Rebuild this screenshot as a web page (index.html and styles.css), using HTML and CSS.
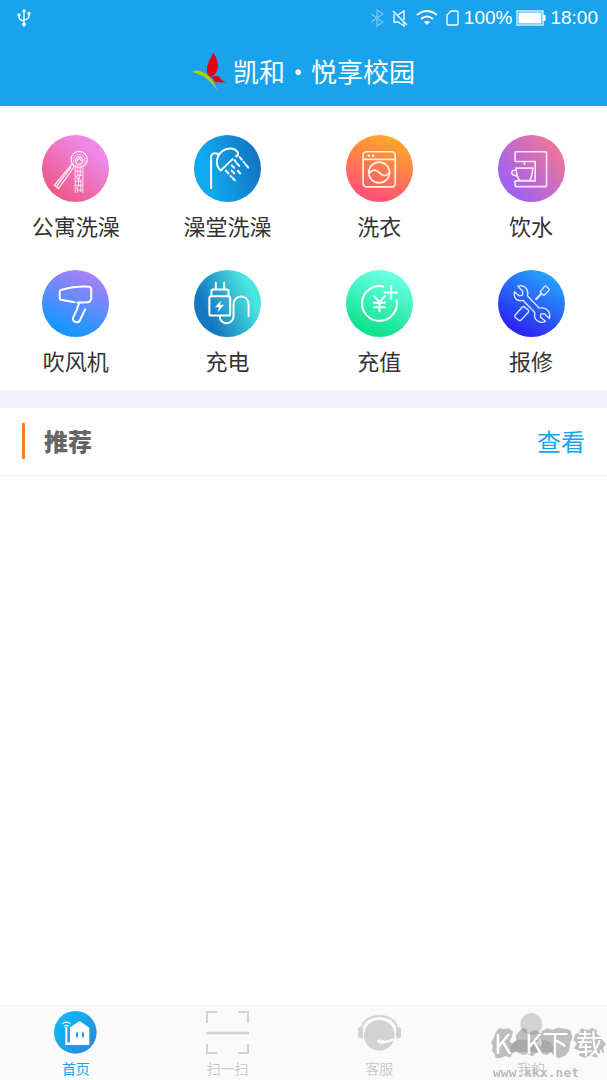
FILE: index.html
```html
<!DOCTYPE html>
<html lang="zh-CN">
<head>
<meta charset="utf-8">
<meta name="viewport" content="width=device-width, initial-scale=1">
<title>凯和·悦享校园</title>
<link rel="stylesheet" href="styles.css">
</head>
<body>
<header class="top">
  <div class="status">
    <svg class="usb" width="16" height="20" viewBox="0 0 16 20" fill="none" stroke="#fff" stroke-width="1.3"><path d="M8 3V17M3 7v2q0 3 5 4M13 6v2q0 3-5 4"/><circle cx="8" cy="3" r="1" fill="#fff"/><circle cx="8" cy="16.500" r="1.300" fill="#fff"/><circle cx="3" cy="7" r="1" fill="#fff"/><circle cx="13" cy="5.500" r="1" fill="#fff"/></svg>
    <div class="status-right">
      <svg width="14" height="18" viewBox="0 0 14 18" fill="none" stroke="#7cc9f5" stroke-width="1.2"><path d="M1 5l12 8-6 4V1l6 4L1 13"/></svg>
      <svg width="16" height="18" viewBox="0 0 16 18" fill="none" stroke="#fff" stroke-width="1.3"><path d="M1 2l14 14M6 6l6-4v9M2 5v8h4l6 4v-4"/></svg>
      <svg class="wifi" width="22" height="18" viewBox="0 0 22 18" fill="none" stroke="#fff" stroke-width="2"><path d="M1 6q10-8 20 0M5 10q6-5 12 0"/><path d="M8 13q3-2 6 0l-3 3z" fill="#fff" stroke="none"/></svg>
      <svg class="sim" width="14" height="18" viewBox="0 0 14 18" fill="none" stroke="#fff" stroke-width="1.3"><path d="M5 2h6q1 0 1 1v12q0 1-1 1H2q-1 0-1-1V6z"/></svg>
      <span>100%</span>
      <svg class="battery" width="30" height="16" viewBox="0 0 30 16"><rect x="1" y="1" width="26" height="14" fill="none" stroke="#fff" stroke-width="1.2"/><path d="M2.500 2.500h23v11h-23zM27 5h2.500v6H27z" fill="#fff"/></svg>
      <span>18:00</span>
    </div>
  </div>
  <div class="title">
    <svg width="34" height="38" viewBox="0 0 102 114"><path d="M0 60Q16 48 42 66Q66 84 76 114Q50 80 30 71Q14 64 0 60z" fill="#b1d000"/><path d="M64 2Q84 34 76 54Q70 72 54 74Q42 66 45 46Q48 30 64 2z" fill="#e60012"/><path d="M56 76Q76 66 84 78Q90 88 102 91Q82 92 68 90Q68 82 56 76z" fill="#e60012"/></svg>
    <h1>凯和·悦享校园</h1>
  </div>
</header>

<main class="content">
  <nav class="services" aria-label="服务">
    <button class="service" type="button">
      <svg viewBox="0 0 200 200"><defs><linearGradient id="g1" x1="0.150" y1="0.850" x2="0.700" y2="0.200"><stop offset="0" stop-color="#ed5787"/><stop offset="1" stop-color="#ee87e8"/></linearGradient></defs><circle cx="100" cy="100" r="100" fill="url(#g1)"/><g fill="none" stroke="#fff" stroke-width="4" opacity="0.850"><circle cx="111" cy="73" r="24"/><circle cx="111" cy="75" r="17" stroke-width="2"/><circle cx="111" cy="76" r="11"/><path d="M103 79q8-16 16 0M90 86l6 9-47 65-12-10zM87 95l-43 58"/><path stroke-width="3" d="M99 97v76M107 100v18l-4 8 6 8v18l-5 8 4 12M114 98v24l-5 6 7 9v33M122 98v75M99 150h22M106 120h14M104 164h14M100 108h20M102 138h16"/></g></svg>
      <span>公寓洗澡</span>
    </button>
    <button class="service" type="button">
      <svg viewBox="0 0 200 200"><defs><linearGradient id="g2" x1="0.200" y1="0.600" x2="1" y2="0.400"><stop offset="0" stop-color="#10a9ef"/><stop offset="1" stop-color="#1373c2"/></linearGradient></defs><circle cx="100" cy="100" r="100" fill="url(#g2)"/><g fill="none" stroke="#fff" stroke-width="6" stroke-linecap="round" stroke-linejoin="round"><path d="M51 159V65q2-13 16-10l6 3M80 106C62 92 67 62 82 50S122 36 131 53q2 7-5 11M80 106l35-34"/><path d="M121 75l3 4M136 66l7 8M148 80l3 4M155 89l7 8M113 91l7 7M127 84l8 8M95 106l8 9M112 106l8 8M131 107l7 8M109 122l3 3M116 129l6 6"/></g></svg>
      <span>澡堂洗澡</span>
    </button>
    <button class="service" type="button">
      <svg viewBox="0 0 200 200"><defs><linearGradient id="g3" x1="0.300" y1="1" x2="0.650" y2="0"><stop offset="0" stop-color="#ff4a7f"/><stop offset="1" stop-color="#ffa922"/></linearGradient></defs><circle cx="100" cy="100" r="100" fill="url(#g3)"/><g fill="none" stroke="#fff0df" stroke-width="5"><rect x="51" y="50" width="96" height="105" rx="10"/><path d="M51 73h96M70 113q14-16 30 0t29 0"/><circle cx="99" cy="112" r="31"/></g><circle cx="68" cy="62" r="4" fill="#fff0df"/><circle cx="81" cy="62" r="4" fill="#fff0df"/></svg>
      <span>洗衣</span>
    </button>
    <button class="service" type="button">
      <svg viewBox="0 0 200 200"><defs><linearGradient id="g4" x1="0.200" y1="0.800" x2="0.850" y2="0.250"><stop offset="0" stop-color="#a162ee"/><stop offset="1" stop-color="#e9749f"/></linearGradient></defs><circle cx="100" cy="100" r="100" fill="url(#g4)"/><g fill="none" stroke="#f8e5fb" stroke-width="5" stroke-linejoin="round"><path d="M55 50h86q4 0 4 4v96q0 4-4 4H55q-4 0-4-4v-13h60V79H55q-4 0-4-4V54q0-4 4-4zM79 79v11M54 99h50q-3 30-10 37H65Q55 124 54 99zM54 106q-12-3-13 6 0 8 15 10"/></g></svg>
      <span>饮水</span>
    </button>
    <button class="service" type="button">
      <svg viewBox="0 0 200 200"><defs><linearGradient id="g5" x1="0.350" y1="0.900" x2="0.700" y2="0.050"><stop offset="0" stop-color="#1697ff"/><stop offset="1" stop-color="#aa80fb"/></linearGradient></defs><circle cx="100" cy="100" r="100" fill="url(#g5)"/><path d="M97 96L57 89q-4 0-4-4V64q0-4 5-5 42-12 82-9 7 1 7 8v26q-1 12-12 12l-24 2q-3 8-6 18l-12 26c-4 15 17 19 21 6l15-31M106 97h14" fill="none" stroke="#fff" stroke-width="6" stroke-linecap="round" stroke-linejoin="round"/></svg>
      <span>吹风机</span>
    </button>
    <button class="service" type="button">
      <svg viewBox="0 0 200 200"><defs><linearGradient id="g6" x1="0.200" y1="0.650" x2="0.850" y2="0.350"><stop offset="0" stop-color="#1378c2"/><stop offset="1" stop-color="#4ae5de"/></linearGradient></defs><circle cx="100" cy="100" r="100" fill="url(#g6)"/><g fill="none" stroke="#fff" stroke-width="6" stroke-linecap="round" stroke-linejoin="round"><path d="M65 38v18M90 38v18M52 78V62q0-4 4-4h43q4 0 4 4v16"/><rect x="46" y="78" width="62" height="58" rx="5"/><path d="M77 137c0 30 41 28 41 0v-34c0-31 45-33 45 0v35"/></g><path d="M81 90L63 111h12l-5 16 20-23H78z" fill="#fff"/></svg>
      <span>充电</span>
    </button>
    <button class="service" type="button">
      <svg viewBox="0 0 200 200"><defs><linearGradient id="g7" x1="0.350" y1="0.900" x2="0.650" y2="0.050"><stop offset="0" stop-color="#10e28d"/><stop offset="1" stop-color="#6affe5"/></linearGradient></defs><circle cx="100" cy="100" r="100" fill="url(#g7)"/><path d="M111 49A52 52 0 1 0 151 90M135 48v38M115 67h38M84 78l16 18 16-18M100 96v27M84 98h32M84 111h32" fill="none" stroke="#fff" stroke-width="6" stroke-linecap="round"/></svg>
      <span>充值</span>
    </button>
    <button class="service" type="button">
      <svg viewBox="0 0 200 200"><defs><linearGradient id="g8" x1="0.300" y1="0.900" x2="0.750" y2="0.100"><stop offset="0" stop-color="#2b26f5"/><stop offset="1" stop-color="#249ffc"/></linearGradient></defs><circle cx="100" cy="100" r="100" fill="url(#g8)"/><g fill="none" stroke="#dce7ff" stroke-width="4" stroke-linejoin="round"><path d="M59 48Q76 43 85 56q6 9 3 21l35 37q19-4 28 10 6 10 2 21l-15-15-10 1-1 10 15 12q-12 7-24-1-12-9-8-25L75 91q-18 3-25-10-4-8-1-16l14 12 10-2 1-11z"/><path d="M51 135l21-24q4-4 8 0l10 8q4 4 0 8l-21 22q-4 4-8 0l-10-8q-3-3 0-6zM129 69l-3-4 13-16q2-3 5 0l8 7q3 3 0 5l-15 15z"/><path stroke-width="6" d="M112 89l18-19"/></g></svg>
      <span>报修</span>
    </button>
  </nav>

  <section class="recommend">
    <h2>推荐</h2>
    <a href="#recommend">查看</a>
  </section>
</main>

<nav class="tabs" aria-label="主导航">
  <button class="tab active" type="button">
    <svg viewBox="0 0 129 129"><defs><linearGradient id="gt" x1="0.100" y1="0.200" x2="0.900" y2="0.850"><stop offset="0" stop-color="#0cb9f6"/><stop offset="1" stop-color="#2d89dd"/></linearGradient></defs><circle cx="64" cy="64" r="64" fill="url(#gt)"/><path d="M34 48h6v46h8V49l29-19 29 20v52H34z" fill="#fff"/><path d="M66 66q3-6 6 0v11q-3 6-6 0zM84 66q3-6 6 0v11q-3 6-6 0z" fill="#249bdf"/><path d="M25 38q12-9 24 0M30 46q7-6 14 0" fill="none" stroke="#fff" stroke-width="4"/></svg>
    <span>首页</span>
  </button>
  <button class="tab" type="button">
    <svg viewBox="0 0 129 129" fill="none" stroke="#d2d2d2" stroke-width="6"><path d="M3 36V3h30M97 3h29v33M3 99v27h30M97 126h29V99"/><path d="M0 66h129" stroke-width="8"/></svg>
    <span>扫一扫</span>
  </button>
  <button class="tab" type="button">
    <svg viewBox="0 0 129 129"><path d="M10 53C19 2 110 2 119 53" fill="none" stroke="#d2d2d2" stroke-width="6"/><path d="M0 52q7-7 15-3v31Q5 84 0 78zM129 52q-7-7-15-3v31q10 4 15-2z" fill="#d2d2d2"/><circle cx="64" cy="73" r="46" fill="#d2d2d2"/><path d="M112 80Q88 90 76 88q-11-6-20 1 7 14 24 8 17-1 34-12z" fill="#fafafa"/></svg>
    <span>客服</span>
  </button>
  <button class="tab" type="button">
    <svg viewBox="0 0 129 129" fill="#d2d2d2"><circle cx="64" cy="39" r="33"/><path d="M2 123V108Q6 86 30 86h70q25 2 28 22v15z"/></svg>
    <span>我的</span>
  </button>
</nav>

<div class="watermark" aria-hidden="true">
  <svg viewBox="0 0 348 96"><path d="M14 16L26 2 36 6 54 4 66 14 62 30 56 42 70 56 78 70 62 82 60 90 40 88 28 94 14 92 10 80 2 70 6 58 0 46 8 34zM84 14L96 2 108 10 110 24 122 12 136 10 150 20 146 36 134 48 150 62 148 76 136 78 124 88 108 80 96 84 78 76 72 62 60 56 76 40 74 26zM152 12L168 4 184 8 202 2 226 6 238 10 244 30 238 48 234 72 222 86 204 94 186 84 180 76 168 84 152 80 150 60 154 46 146 34zM252 22L266 16 270 4 290 10 304 2 320 12 328 26 334 38 346 52 336 62 340 76 328 80 316 92 298 86 280 92 264 86 266 72 248 64 258 50 248 40z"/></svg>
  <strong><span>K</span><span>K</span><span>下</span><span>载</span></strong>
  <small>www.kkx.net</small>
</div>
</body>
</html>
```
FILE: styles.css
```css
* {
  box-sizing: border-box;
}

body {
  margin: 0;
  min-height: 100vh;
  display: flex;
  flex-direction: column;
  background: #fff;
  color: #333;
  font-family: "Noto Sans CJK SC", sans-serif;
}

svg {
  display: block;
  flex: none;
}

button {
  border: 0;
  padding: 0;
  background: none;
  color: inherit;
  font: inherit;
  cursor: pointer;
}

.top {
  background: #1aa3ed;
  color: #fff;
}

.status {
  height: 36px;
  padding: 0 9px 0 16px;
  display: flex;
  align-items: center;
  justify-content: space-between;
  font: 19px "Liberation Sans", sans-serif;
}

.status-right {
  display: flex;
  align-items: center;
  gap: 4px;
}

.status-right svg + svg {
  margin-left: 4px;
}

.title {
  height: 70px;
  display: flex;
  align-items: center;
  justify-content: center;
  gap: 7px;
}

.title h1 {
  margin: 0;
  font-size: 26px;
  font-weight: 400;
  line-height: 38px;
}

.content {
  flex: 1;
}

.services {
  display: grid;
  grid-template-columns: repeat(4, 1fr);
  row-gap: 30px;
  padding: 29px 0 15px;
  border-bottom: 18px solid #f1f5fa;
}

.service {
  display: flex;
  flex-direction: column;
  align-items: center;
  gap: 8px;
  font-size: 22px;
  line-height: 30px;
}

.service svg {
  width: 67px;
  height: 67px;
}

.recommend {
  height: 68px;
  padding: 0 22px 2px;
  display: flex;
  align-items: center;
  justify-content: space-between;
  border-bottom: 1px solid #eee;
}

.recommend h2 {
  margin: 0;
  padding-left: 19px;
  border-left: 3px solid #ff7e29;
  color: #666;
  font-size: 24px;
  font-weight: 900;
  line-height: 36px;
}

.recommend a {
  color: #1aa3ed;
  font-size: 24px;
  line-height: 36px;
  text-decoration: none;
}

.tabs {
  display: grid;
  grid-template-columns: repeat(4, 1fr);
  padding: 5px 0 2px;
  border-top: 1px solid #eee;
  background: #fafafa;
}

.tab {
  display: flex;
  flex-direction: column;
  align-items: center;
  gap: 4px;
  color: #ccc;
  font-size: 14px;
  line-height: 20px;
}

.tab svg {
  width: 43px;
  height: 43px;
}

.tab.active {
  color: #1aa3ed;
}

.watermark {
  position: fixed;
  right: 0;
  bottom: 0;
  width: 116px;
  height: 53px;
  display: flex;
  flex-direction: column;
  pointer-events: none;
}

.watermark svg {
  position: absolute;
  top: 0;
  left: 0;
  width: 116px;
  height: 32px;
  fill: #777;
  opacity: 0.45;
}

.watermark strong {
  position: relative;
  padding-left: 3px;
  display: grid;
  grid-template-columns: 31px 17px 34px 28px;
  color: #fff;
  font-size: 27px;
  font-weight: 400;
  line-height: 32px;
}

.watermark small {
  padding-left: 2px;
  color: #bbb;
  font: bold 13px/28px "DejaVu Sans Mono", monospace;
}
```
